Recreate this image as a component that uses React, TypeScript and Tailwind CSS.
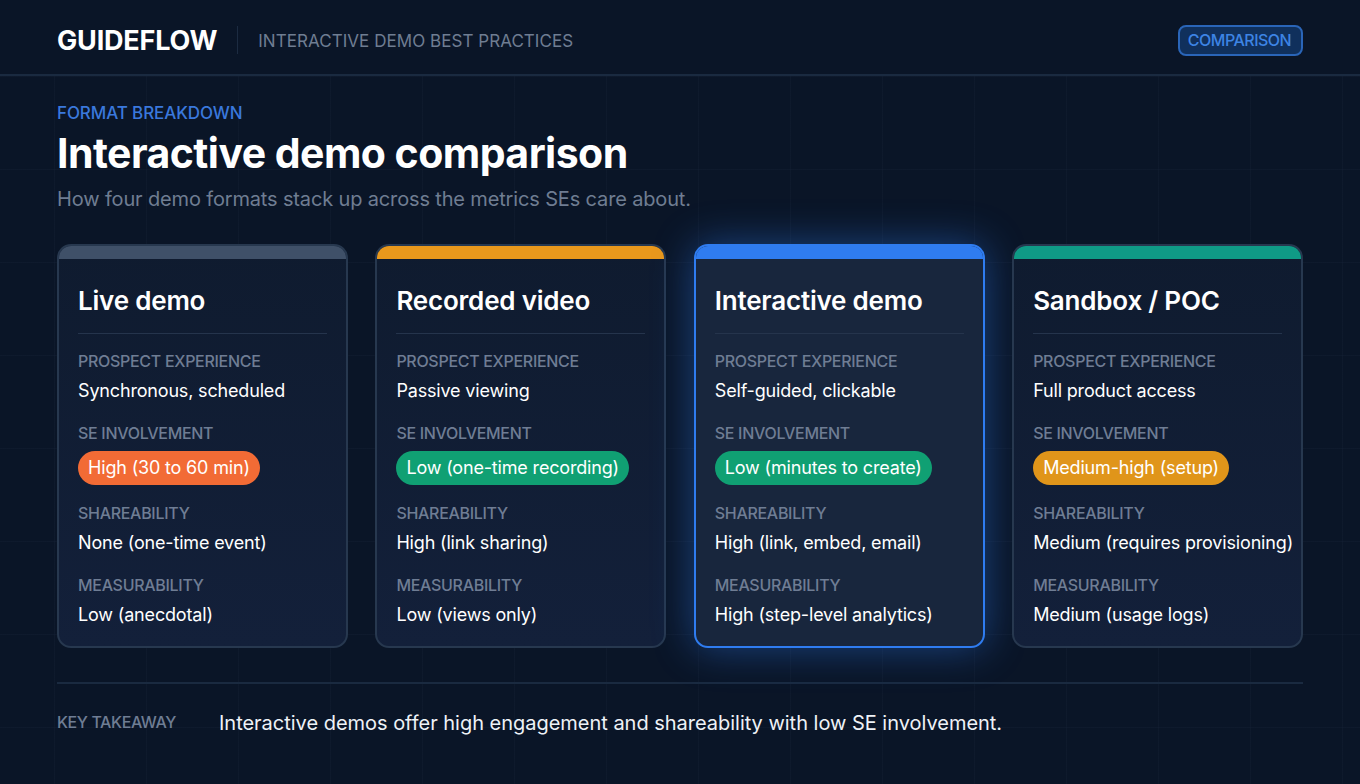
const cards = [
  {
    title: "Live demo",
    bar: "bg-[#3f5068]",
    exp: "Synchronous, scheduled",
    se: "High (30 to 60 min)",
    pill: "bg-[#f26b35]",
    share: "None (one-time event)",
    measure: "Low (anecdotal)",
  },
  {
    title: "Recorded video",
    bar: "bg-[#e9981c]",
    exp: "Passive viewing",
    se: "Low (one-time recording)",
    pill: "bg-[#10a073]",
    share: "High (link sharing)",
    measure: "Low (views only)",
  },
  {
    title: "Interactive demo",
    bar: "bg-[#2f7cf0]",
    exp: "Self-guided, clickable",
    se: "Low (minutes to create)",
    pill: "bg-[#10a073]",
    share: "High (link, embed, email)",
    measure: "High (step-level analytics)",
    active: true,
  },
  {
    title: "Sandbox / POC",
    bar: "bg-[#0f9a86]",
    exp: "Full product access",
    se: "Medium-high (setup)",
    pill: "bg-[#e0951a]",
    share: "Medium (requires provisioning)",
    measure: "Medium (usage logs)",
  },
];

function Label({ children }: { children: string }) {
  return <div className="text-[16px] leading-[20px] font-medium tracking-[-0.3px] text-[#6f7d94]">{children}</div>;
}

function Value({ children }: { children: string }) {
  return <div className="mt-[8px] whitespace-nowrap text-[18px] leading-[24px] tracking-[-0.17px] text-white">{children}</div>;
}

function Card({ card }: { card: (typeof cards)[number] }) {
  return (
    <div
      className={`flex h-[404px] flex-col overflow-hidden rounded-[14px] border-2 ${
        card.active
          ? "border-[#2f7cf0] bg-[#18263d] shadow-[0_0_40px_rgba(47,124,240,0.45)]"
          : "border-[#27384f] bg-[linear-gradient(180deg,#0f1b2f,#13203a)]"
      }`}
    >
      <div className={`h-[13px] shrink-0 ${card.bar}`} />
      <div className="flex flex-col px-[19px] pt-[24px]">
        <div className="whitespace-nowrap text-[26px] leading-[36px] font-semibold tracking-[-0.2px] text-white">{card.title}</div>
        <div className="mt-[14px] h-px w-full bg-[#25344c]" />
        <div className="mt-[17px]">
          <Label>PROSPECT EXPERIENCE</Label>
        </div>
        <Value>{card.exp}</Value>
        <div className="mt-[20px]">
          <Label>SE INVOLVEMENT</Label>
        </div>
        <div
          className={`mt-[8px] h-[34px] self-start whitespace-nowrap rounded-full px-[10px] text-[18px] leading-[34px] tracking-[-0.17px] text-white ${card.pill}`}
        >
          {card.se}
        </div>
        <div className="mt-[18px]">
          <Label>SHAREABILITY</Label>
        </div>
        <Value>{card.share}</Value>
        <div className="mt-[20px]">
          <Label>MEASURABILITY</Label>
        </div>
        <Value>{card.measure}</Value>
      </div>
    </div>
  );
}

export default function App() {
  return (
    <div className="h-[784px] w-[1360px] overflow-hidden bg-[#0a1527] bg-[linear-gradient(rgba(120,150,190,0.04)_1px,transparent_1px),linear-gradient(90deg,rgba(120,150,190,0.04)_1px,transparent_1px)] bg-[size:92px_93px] bg-[position:54px_76px] font-['Inter',sans-serif]">
      <header className="flex h-[76px] items-center justify-between border-b-2 border-[#1a2a40] bg-[#0a1527] px-[57px] pt-[6px]">
        <div className="flex items-center">
          <span className="text-[27px] font-bold leading-none tracking-[-0.2px] text-white">GUIDEFLOW</span>
          <div className="mx-[20px] h-[28px] w-px bg-[#1c2b41]" />
          <span className="pt-[2px] text-[17px] leading-none tracking-[0.05px] text-[#6f7d92]">
            INTERACTIVE DEMO BEST PRACTICES
          </span>
        </div>
        <div className="flex h-[31px] w-[125px] items-center justify-center rounded-[8px] border-2 border-[#2a65b8] bg-[#10305c] pr-[2px] text-[16px] font-medium tracking-[-0.5px] text-[#3d84e4]">
          COMPARISON
        </div>
      </header>

      <main className="px-[57px] pt-[26px]">
        <div className="text-[17px] leading-[22px] font-medium tracking-[-0.1px] text-[#3a78dc]">FORMAT BREAKDOWN</div>
        <h1 className="mt-[3px] text-[41px] leading-[52px] font-bold tracking-[-0.54px] text-white">
          Interactive demo comparison
        </h1>
        <p className="mt-[6px] text-[20px] leading-[28px] tracking-[-0.15px] text-[#6f7d92]">
          How four demo formats stack up across the metrics SEs care about.
        </p>

        <div className="mt-[31px] grid grid-cols-4 gap-[27.5px]">
          {cards.map((card) => (
            <Card key={card.title} card={card} />
          ))}
        </div>

        <div className="mt-[34px] flex items-center border-t-2 border-[#1a2a40] pt-[25px]">
          <span className="w-[162px] shrink-0 pb-[2px] text-[16px] font-medium leading-[26px] tracking-[-0.4px] text-[#6f7d94]">KEY TAKEAWAY</span>
          <span className="text-[20px] leading-[28px] tracking-[-0.02px] text-[#eef2f7]">
            Interactive demos offer high engagement and shareability with low SE involvement.
          </span>
        </div>
      </main>
    </div>
  );
}
